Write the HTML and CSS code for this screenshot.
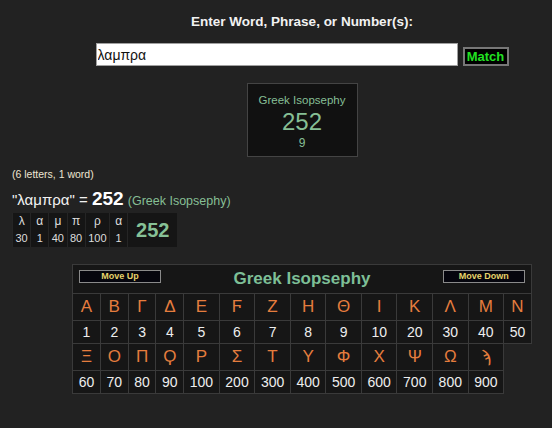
FILE: index.html
```html
<!DOCTYPE html>
<html lang="en">
<head>
  <meta charset="UTF-8">
  <meta name="viewport" content="width=device-width, initial-scale=1.0">
  <title>Gematria Calculator</title>
  <link rel="stylesheet" href="styles.css">
</head>
<body>
  <div class="search">
    <h1 class="prompt">Enter Word, Phrase, or Number(s):</h1>
    <form class="search-form">
      <input type="text" class="search-input" value="λαμπρα">
      <button type="submit" class="match-btn">Match</button>
    </form>
    <div class="cipher-box">
      <div class="cipher-name">Greek Isopsephy</div>
      <div class="cipher-value">252</div>
      <div class="cipher-reduced">9</div>
    </div>
  </div>

  <div class="result">
    <p class="count">(6 letters, 1 word)</p>
    <p class="phrase">"λαμπρα" = <b class="phrase-total">252</b> <span class="cipher-tag">(Greek Isopsephy)</span></p>
    <table class="breakdown">
      <tr class="bd-letters">
        <td>λ</td><td>α</td><td>μ</td><td>π</td><td>ρ</td><td>α</td>
        <td class="total" rowspan="2">252</td>
      </tr>
      <tr>
        <td>30</td><td>1</td><td>40</td><td>80</td><td>100</td><td>1</td>
      </tr>
    </table>
  </div>

  <div class="chart-wrap">
    <table class="chart">
      <tr class="head">
        <td colspan="14">
          <div class="head-bar">
            <button type="button" class="move-btn">Move Up</button>
            <span class="chart-title">Greek Isopsephy</span>
            <button type="button" class="move-btn">Move Down</button>
          </div>
        </td>
      </tr>
      <tr class="ltr">
        <td>Α</td><td>Β</td><td>Γ</td><td>Δ</td><td>Ε</td><td>Ϝ</td><td>Ζ</td>
        <td>Η</td><td>Θ</td><td>Ι</td><td>Κ</td><td>Λ</td><td>Μ</td><td>Ν</td>
      </tr>
      <tr class="num">
        <td>1</td><td>2</td><td>3</td><td>4</td><td>5</td><td>6</td><td>7</td>
        <td>8</td><td>9</td><td>10</td><td>20</td><td>30</td><td>40</td><td>50</td>
      </tr>
      <tr class="ltr">
        <td>Ξ</td><td>Ο</td><td>Π</td><td>Ϙ</td><td>Ρ</td><td>Σ</td><td>Τ</td>
        <td>Υ</td><td>Φ</td><td>Χ</td><td>Ψ</td><td>Ω</td><td>ϡ</td>
      </tr>
      <tr class="num">
        <td>60</td><td>70</td><td>80</td><td>90</td><td>100</td><td>200</td><td>300</td>
        <td>400</td><td>500</td><td>600</td><td>700</td><td>800</td><td>900</td>
      </tr>
    </table>
  </div>
</body>
</html>
```

FILE: styles.css
```css
body {
  margin: 0;
  background-color: #222;
  color: #eee;
  font-family: "Liberation Sans", Arial, "DejaVu Sans", sans-serif;
}
.search {
  margin-left: 52px;
  padding-top: 13px;
  text-align: center;
}
.prompt {
  margin: 0;
  font-size: 13.5px;
  line-height: 17px;
  font-weight: bold;
  color: #f2f2f2;
}
.search-form {
  display: flex;
  justify-content: center;
  align-items: flex-end;
  gap: 5px;
  margin: 13px 0 0;
}
.search-input {
  box-sizing: border-box;
  width: 362px;
  height: 23px;
  padding: 0 1px;
  border: 1px solid #a0a0a0;
  background-color: #fff;
  color: #111;
  font-family: inherit;
  font-size: 14px;
}
.match-btn {
  box-sizing: border-box;
  width: 46px;
  height: 19px;
  padding: 0;
  border: 2px solid #777;
  background-color: #000;
  color: #22e022;
  font-family: inherit;
  font-size: 13px;
  font-weight: bold;
  line-height: 15px;
}
.cipher-box {
  box-sizing: border-box;
  width: 111px;
  margin: 17px auto 0;
  padding: 9px 0 6px;
  border: 1px solid #444;
  background-color: #111;
  color: #86bf95;
}
.cipher-name {
  font-size: 11.5px;
  line-height: 14px;
}
.cipher-value {
  margin-top: 2px;
  font-size: 24px;
  line-height: 26px;
}
.cipher-reduced {
  margin-top: 1px;
  font-size: 12px;
  line-height: 14px;
}
.result {
  padding-left: 12px;
  margin-top: 11px;
}
.count {
  margin: 0;
  font-size: 10.5px;
  line-height: 13px;
  color: #eee6d2;
}
.phrase {
  margin: 7px 0 0;
  font-size: 15px;
  line-height: 22px;
  color: #f2f2f2;
}
.phrase-total {
  font-size: 19px;
  color: #fff;
}
.cipher-tag {
  font-size: 12.5px;
  color: #86bf95;
}
.breakdown {
  margin-top: 1px;
  border-collapse: collapse;
  background-color: #151515;
}
.breakdown td {
  padding: 2px 2.5px;
  min-width: 12px;
  border-left: 1px solid #252525;
  font-size: 11px;
  line-height: 13px;
  text-align: center;
  color: #ddd;
}
.breakdown .bd-letters td {
  font-size: 12px;
}
.breakdown td.total {
  padding: 0 8px;
  font-size: 20px;
  font-weight: bold;
  color: #86c196;
}
.chart-wrap {
  margin-left: 52px;
  padding-top: 17px;
}
.chart {
  margin: 0 auto;
  border-collapse: collapse;
}
.chart td {
  padding: 3px 5.6px;
  border: 1px solid #3a3a3a;
  background-color: #161616;
  text-align: center;
}
.chart .head td {
  padding: 4px 6px;
}
.head-bar {
  display: flex;
  justify-content: space-between;
  align-items: flex-start;
}
.move-btn {
  box-sizing: border-box;
  width: 82px;
  height: 13px;
  margin-top: 1px;
  padding: 0;
  border: 1px solid #8a8a8a;
  background-color: #05050d;
  color: #e6d36a;
  font-family: inherit;
  font-size: 9px;
  font-weight: bold;
  line-height: 11px;
}
.chart-title {
  font-size: 17px;
  line-height: 20px;
  font-weight: bold;
  color: #7dbf96;
}
.chart .ltr td {
  font-size: 17px;
  line-height: 20px;
  color: #e57d3e;
}
.chart .num td {
  font-size: 14px;
  line-height: 16px;
  color: #eee;
}
```
